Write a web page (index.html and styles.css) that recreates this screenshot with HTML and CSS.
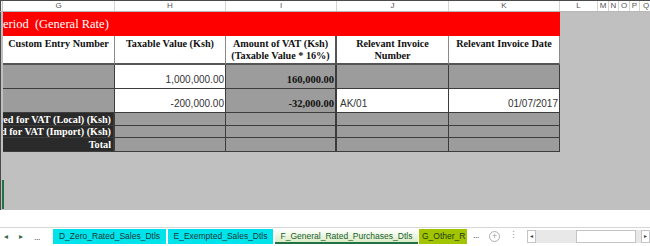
FILE: index.html
```html
<!DOCTYPE html>
<html lang="en">
<head>
    <meta charset="UTF-8">
    <title>Purchases - General Rate</title>
    <link rel="stylesheet" href="styles.css">
</head>
<body>
<div class="app">
    <div class="col-heads">
        <div class="edge"></div>
        <div class="ch w-g">G</div>
        <div class="ch w-h">H</div>
        <div class="ch w-i">I</div>
        <div class="ch w-j">J</div>
        <div class="ch w-k">K</div>
        <div class="ch w-l">L</div>
        <div class="ch w-m">M</div>
        <div class="ch w-n">N</div>
        <div class="ch w-o">O</div>
        <div class="ch w-p">P</div>
        <div class="ch w-q">Q</div>
    </div>

    <div class="sheet">
        <div class="edge"></div>
        <div class="grid">
            <div class="banner"><span>Period&nbsp; (General Rate)</span></div>

            <div class="cell head">Custom Entry Number</div>
            <div class="cell head">Taxable Value (Ksh)</div>
            <div class="cell head thick">Amount of VAT (Ksh)<br>(Taxable Value * 16%)</div>
            <div class="cell head">Relevant Invoice<br>Number</div>
            <div class="cell head">Relevant Invoice Date</div>

            <div class="cell fill"></div>
            <div class="cell white num">1,000,000.00</div>
            <div class="cell fill num bold thick">160,000.00</div>
            <div class="cell fill"></div>
            <div class="cell fill"></div>

            <div class="cell fill"></div>
            <div class="cell white num">-200,000.00</div>
            <div class="cell fill num bold thick">-32,000.00</div>
            <div class="cell white txt">AK/01</div>
            <div class="cell white num">01/07/2017</div>

            <div class="cell dark"><span>Total Purchases Registered for VAT (Local) (Ksh)</span></div>
            <div class="cell fill"></div>
            <div class="cell fill thick"></div>
            <div class="cell fill"></div>
            <div class="cell fill"></div>

            <div class="cell dark"><span>Total Purchases Registered for VAT (Import) (Ksh)</span></div>
            <div class="cell fill"></div>
            <div class="cell fill thick"></div>
            <div class="cell fill"></div>
            <div class="cell fill"></div>

            <div class="cell dark"><span>Total</span></div>
            <div class="cell fill"></div>
            <div class="cell fill thick"></div>
            <div class="cell fill"></div>
            <div class="cell fill"></div>
        </div>
        <div class="select-mark"></div>
    </div>

    <div class="blank"></div>

    <div class="tabbar">
        <div class="nav">
            <span class="arrow">&#9666;</span>
            <span class="arrow">&#9656;</span>
            <span class="dots">...</span>
        </div>
        <div class="tab cyan tab-d">D_Zero_Rated_Sales_Dtls</div>
        <div class="tab cyan tab-e">E_Exempted_Sales_Dtls</div>
        <div class="tab active">F_General_Rated_Purchases_Dtls</div>
        <div class="tab olive">G_Other_R</div>
        <span class="dots more">...</span>
        <span class="plus">+</span>
        <span class="vdots">&#8942;</span>
        <div class="hscroll">
            <div class="sbtn">&#9666;</div>
            <div class="track"><div class="thumb"></div></div>
            <div class="sbtn">&#9656;</div>
        </div>
    </div>
</div>
</body>
</html>
```

FILE: styles.css
```css
body {
    margin: 0;
    background: #ffffff;
}

.app {
    width: 650px;
    height: 246px;
    box-sizing: border-box;
    border-top: 1px solid #4a4a4a;
    display: flex;
    flex-direction: column;
    overflow: hidden;
    font-family: "Liberation Sans", Arial, sans-serif;
}

/* column letters */
.col-heads {
    display: flex;
    flex: none;
    height: 11px;
    box-sizing: border-box;
    background: #ffffff;
    border-bottom: 1px solid #b8b8b8;
}

.edge {
    width: 3px;
    flex: none;
    box-sizing: border-box;
    border-left: 1px solid #4a4a4a;
    border-right: 1px solid #c8c8c8;
    background: #f4f4f4;
}

.ch {
    flex: none;
    box-sizing: border-box;
    border-right: 1px solid #d4d4d4;
    font-size: 8px;
    line-height: 10px;
    color: #555;
    text-align: center;
}

.w-g { width: 112px; }
.w-h { width: 111px; }
.w-i { width: 111px; }
.w-j { width: 112px; }
.w-k { width: 111px; }
.w-l { width: 38px; }
.w-m { width: 11px; }
.w-n { width: 10px; }
.w-o { width: 11px; }
.w-p { width: 10px; }
.w-q { width: 12px; border-right: none; }

/* sheet */
.sheet {
    display: flex;
    flex: none;
    height: 198px;
    background: #c0c0c0;
    position: relative;
}

.sheet .edge {
    background: #c0c0c0;
    border-right: none;
}

.grid {
    display: grid;
    grid-template-columns: 112px 111px 111px 112px 111px;
    grid-template-rows: 24px 29px 24px 24px 13px 12px 14px;
    align-self: flex-start;
}

.banner {
    grid-column: 1 / 6;
    background: #ff0000;
    color: #ffffff;
    font-family: "Liberation Serif", "Times New Roman", serif;
    font-size: 12.5px;
    line-height: 24px;
    white-space: pre;
    overflow: hidden;
}

.banner span {
    margin-left: -7px;
}

.cell {
    box-sizing: border-box;
    border-right: 1px solid #3c3c3c;
    border-bottom: 1px solid #3c3c3c;
    overflow: hidden;
    white-space: nowrap;
    font-size: 10px;
    color: #333;
}

.cell.thick {
    border-right: 2px solid #3c3c3c;
}

.head {
    background: #ffffff;
    border-right-color: #8a8a8a;
    border-bottom: 2px solid #555;
    font-family: "Liberation Serif", "Times New Roman", serif;
    font-weight: bold;
    font-size: 10.2px;
    line-height: 12px;
    color: #111;
    text-align: center;
    padding-top: 2px;
}

.head.thick {
    border-right: 2px solid #555;
}

.fill {
    background: #9c9c9c;
}

.white {
    background: #ffffff;
}

.num {
    display: flex;
    align-items: flex-end;
    justify-content: flex-end;
    padding: 0 1px 3px 0;
}

.txt {
    display: flex;
    align-items: flex-end;
    padding: 0 0 3px 3px;
}

.bold {
    font-family: "Liberation Serif", "Times New Roman", serif;
    font-weight: bold;
    font-size: 10.5px;
    color: #111;
}

.dark {
    background: #2a2a2a;
    display: flex;
    justify-content: flex-end;
    align-items: center;
    padding-right: 2px;
    font-family: "Liberation Serif", "Times New Roman", serif;
    font-weight: bold;
    font-size: 10.2px;
    color: #ffffff;
    border-right: 2px solid #3c3c3c;
}

.dark span {
    flex: none;
}

.select-mark {
    position: absolute;
    left: 2px;
    top: 168px;
    width: 2px;
    height: 29px;
    background: #217346;
}

.blank {
    flex: none;
    height: 17px;
    background: #ffffff;
}

/* sheet tabs */
.tabbar {
    flex: 1;
    display: flex;
    align-items: flex-start;
    background: #ffffff;
    border-top: 1px solid #d6d6d6;
    padding-top: 1px;
    font-size: 8.5px;
}

.nav {
    width: 53px;
    flex: none;
    box-sizing: border-box;
    display: flex;
    align-items: center;
    height: 15px;
    padding-left: 4px;
    gap: 11px;
    color: #3a6a46;
    font-size: 8px;
}

.dots {
    color: #555;
    font-size: 9px;
    letter-spacing: -0.5px;
}

.tab {
    flex: none;
    height: 15px;
    line-height: 14px;
    box-sizing: border-box;
    margin-right: 2px;
    text-align: center;
    color: #1b3a3a;
    white-space: nowrap;
    overflow: hidden;
}

.tab.cyan {
    background: #00e3ea;
}

.tab-d {
    width: 113px;
}

.tab-e {
    width: 105px;
}

.tab.active {
    width: 143px;
    margin-right: 1px;
    background: linear-gradient(#ffffff, #dcedc6);
    color: #17602c;
    border-bottom: 2px solid #217346;
}

.tab.olive {
    width: 48px;
    background: #a3c400;
    text-align: left;
    padding-left: 3px;
    color: #1c3c1c;
}

.more {
    margin: 1px 0 0 4px;
}

.plus {
    flex: none;
    width: 11px;
    height: 11px;
    margin: 2px 0 0 10px;
    box-sizing: border-box;
    border: 1px solid #b0b0b0;
    border-radius: 50%;
    color: #a0a0a0;
    font-size: 9px;
    line-height: 9px;
    text-align: center;
}

.vdots {
    margin: 1px 0 0 9px;
    color: #999;
    font-size: 9px;
}

.hscroll {
    display: flex;
    margin: 1px 0 0 9px;
    height: 13px;
    flex: 1;
}

.sbtn {
    width: 9px;
    flex: none;
    box-sizing: border-box;
    border: 1px solid #c4c4c4;
    background: #ffffff;
    font-size: 6px;
    line-height: 11px;
    text-align: center;
    color: #444;
}

.track {
    flex: 1;
    background: #e8e8e8;
    display: flex;
    justify-content: flex-end;
    padding-right: 5px;
}

.thumb {
    width: 60px;
    box-sizing: border-box;
    border: 1px solid #c4c4c4;
    background: #ffffff;
}
```
